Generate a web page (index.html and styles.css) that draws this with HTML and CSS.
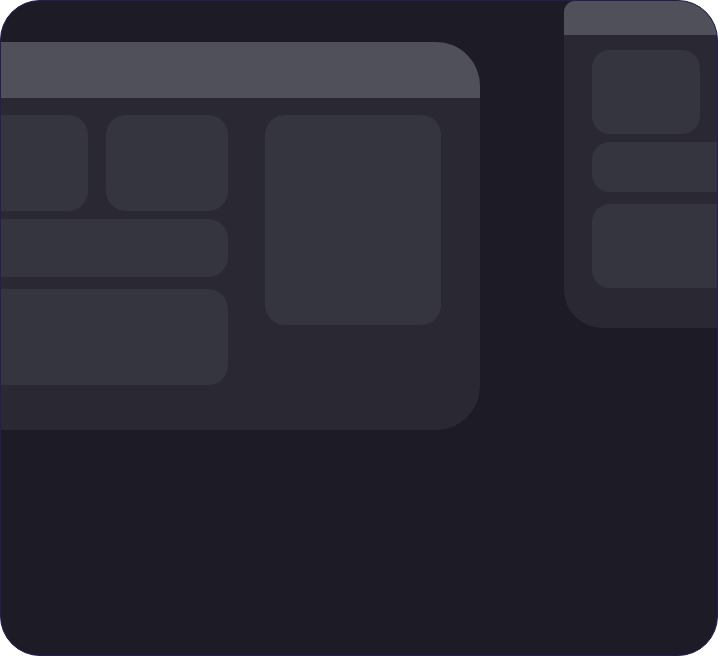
FILE: index.html
```html
<!DOCTYPE html>
<html lang="en">
<head>
<meta charset="utf-8">
<title>Windows</title>
<link rel="stylesheet" href="styles.css">
</head>
<body>
<div class="frame">
  <div class="window window-main">
    <div class="win-header"></div>
    <div class="win-body">
      <div class="col-left">
        <div class="row-top">
          <div class="tile tile-sq"></div>
          <div class="tile tile-sq"></div>
        </div>
        <div class="tile tile-bar"></div>
        <div class="tile tile-wide"></div>
      </div>
      <div class="tile tile-tall"></div>
    </div>
  </div>
  <div class="window window-side">
    <div class="win-header side-header"></div>
    <div class="side-body">
      <div class="tile side-sq"></div>
      <div class="tile side-bar"></div>
      <div class="tile side-wide"></div>
    </div>
  </div>
</div>
</body>
</html>
```
FILE: styles.css
```css
html, body {
  margin: 0;
  padding: 0;
  background: #ffffff;
}
.frame {
  position: relative;
  box-sizing: border-box;
  width: 718px;
  height: 656px;
  border: 1px solid #251c52;
  border-radius: 40px;
  background: #1c1b26;
  overflow: hidden;
}
.window {
  position: absolute;
  background: #292833;
  overflow: hidden;
}
.win-header {
  background: #50505b;
}
.tile {
  background: #35353f;
  border-radius: 20px;
}

/* main window */
.window-main {
  left: -61px;
  top: 41px;
  width: 540px;
  height: 388px;
  border-radius: 44px;
}
.window-main .win-header {
  height: 56px;
}
.win-body {
  display: flex;
  gap: 37px;
  padding: 17px 39px 45px 26px;
}
.col-left {
  width: 262px;
  display: flex;
  flex-direction: column;
}
.row-top {
  display: flex;
  gap: 18px;
}
.tile-sq {
  width: 122px;
  height: 96px;
}
.tile-bar {
  height: 58px;
  margin-top: 8px;
}
.tile-wide {
  height: 96px;
  margin-top: 12px;
}
.tile-tall {
  width: 176px;
  height: 210px;
}

/* side window */
.window-side {
  left: 563px;
  top: 0;
  width: 220px;
  height: 327px;
  border-radius: 11px 40px 40px 38px;
}
.side-header {
  height: 34px;
}
.side-body {
  display: flex;
  flex-direction: column;
  padding: 15px 0 0 28px;
}
.side-sq {
  width: 108px;
  height: 84px;
  border-radius: 18px;
}
.side-bar {
  height: 50px;
  margin-top: 8px;
  border-radius: 18px;
}
.side-wide {
  height: 84px;
  margin-top: 12px;
  border-radius: 18px;
}
```
